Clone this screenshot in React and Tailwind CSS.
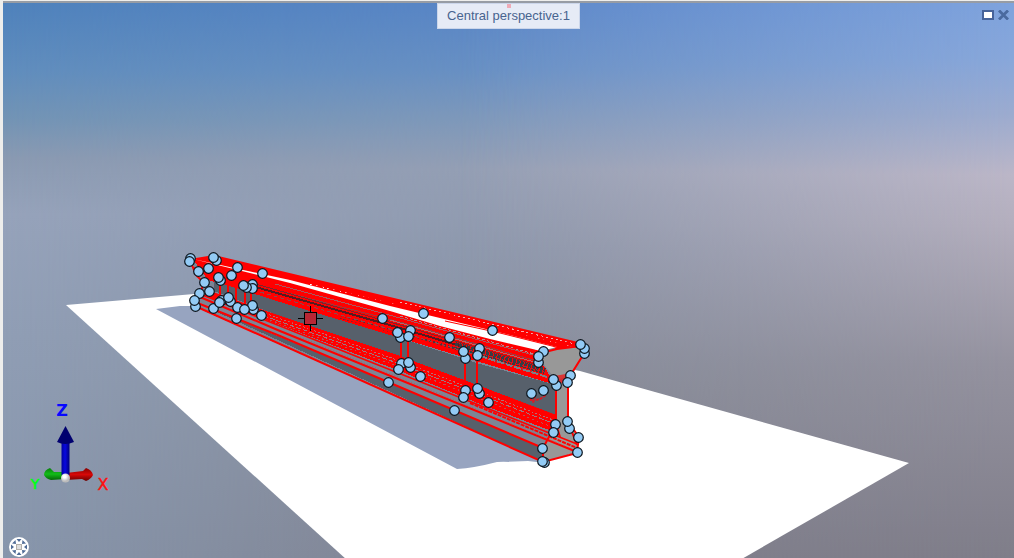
const NODES = [
  [190, 258], [189, 261], [216, 260], [213, 257], [237, 267], [262, 273], [198, 271], [208, 268], [231, 275],
  [220, 280], [218, 277], [204, 282], [209, 291], [199, 293], [195, 306], [194, 300], [213, 308], [221, 300],
  [219, 302], [230, 301], [228, 297], [237, 307], [252, 284], [252, 288], [246, 287], [243, 285], [253, 309],
  [252, 305], [244, 309], [261, 315], [236, 318], [382, 318], [423, 313], [492, 330], [400, 337], [397, 332],
  [410, 330], [408, 336], [449, 337], [465, 358], [463, 351], [479, 348], [477, 355], [401, 363], [398, 369],
  [410, 367], [408, 362], [420, 376], [388, 382], [465, 390], [463, 397], [479, 393], [477, 388], [488, 402],
  [454, 410], [543, 351], [538, 362], [538, 356], [584, 353], [584, 348], [580, 344], [556, 385], [553, 379],
  [570, 375], [567, 382], [531, 393], [543, 390], [555, 424], [553, 432], [569, 428], [567, 421], [578, 437],
  [577, 452], [542, 448], [544, 462], [542, 461],
];

const RED_EDGES = [
  "M190 260L214 256L582 344",
  "M214 260L582 348",
  "M194 268L290 290L541 359",
  "M210 279L280 300L400 334L556 382",
  "M210 292L280 317L400 358L556 416",
  "M200 297L280 331L577 452",
  "M195 302L280 336L388 382L543 448",
  "M195 306L543 462L577 453",
];

const THIN_EDGES = [
  "M401 335V366M408 335V365M465 356V394M477 354V391",
  "M228 276V300M236 278V305M245 286V308M251 286V306M220 279V302",
  "M556 383V424M568 380V422",
  "M541 353L557 349L581 346L585 352L570 376L568 382",
  "M556 424L543 448V462M568 422L579 437L577 452",
  "M568 422L577 445M556 424L560 437",
  "M190 260L196 275L204 283L200 293L194 302",
];

function Viewport() {
  return (
    <svg className="absolute inset-0 h-full w-full" viewBox="3 3 1011 555" preserveAspectRatio="xMinYMin slice" role="img" aria-label="3D beam model">
      <polygon points="66,305 194,294 580,371 909,463 740,560 347,560" fill="#fff" />
      <path d="M156 309L180 306L200 306L545 463L528 461L497 462Q474 468 457 469Z" fill="#97a4c0" />

      <g shapeRendering="crispEdges">
        <polygon points="190,259 214,256 582,344 570,376 568,422 577,452 543,462 195,307 204,283" fill="#7c8595" />
        <polygon points="190,260 214,256 582,344 557,349" fill="#f00" />
        <polygon points="194,261 214,265 290,283 541,351 541,362 556,385 400,338 280,303 208,280" fill="#f00" />
        <polygon points="214,281 280,302 400,338 480,364 556,385 556,416 480,387 400,357 280,316 214,291" fill="#57606b" />
        <polygon points="208,291 280,316 400,356 480,386 556,415 557,433 480,404 400,371 280,325 204,296" fill="#f00" />
        <polygon points="195,302 280,337 388,382 543,448 543,462" fill="#57606b" />

        <g fill="none">
          <path d="M275 284L400 318L540 357" stroke="#a75a60" strokeWidth="1" />
          <path d="M400 316L541 356" stroke="#b98a90" strokeWidth="1" strokeDasharray="3 2" />
          <path d="M265 287L400 322L540 362" stroke="#9a3a40" strokeWidth="1" />
          <path d="M390 320L541 364" stroke="#b76768" strokeWidth="1" />
          <path d="M245 281L400 325L541 366" stroke="#7f252b" strokeWidth="1" />
          <path d="M252 286L400 328L470 349" stroke="#541c22" strokeWidth="2" />
          <path d="M455 345L545 371" stroke="#373d45" strokeWidth="6" strokeDasharray="3 1" />
          <path d="M455 346L547 373" stroke="#d01820" strokeWidth="1" strokeDasharray="5 2" />
          <path d="M340 317L460 350" stroke="#51333b" strokeWidth="3" strokeDasharray="2 2" />
          <path d="M260 292L400 332L549 377" stroke="#8a4a50" strokeWidth="1" strokeDasharray="4 3" />
          <path d="M480 356L550 378" stroke="#7c8088" strokeWidth="2" strokeDasharray="7 2" />
          <path d="M250 308L400 361L553 420" stroke="#b86b71" strokeWidth="1" strokeDasharray="2 2" />
          <path d="M250 311L400 364L555 424" stroke="#9c7880" strokeWidth="1" strokeDasharray="5 2" />
          <path d="M270 320L400 367L555 428" stroke="#b65056" strokeWidth="1" strokeDasharray="2 3" />
          <path d="M310 284L440 314L575 347" stroke="#fff" strokeWidth="1" strokeDasharray="2 4" />
          <path d="M400 302L575 344" stroke="#efadb0" strokeWidth="1" strokeDasharray="2 3" />
        </g>
      </g>

      <g fill="#989898">
        <polygon points="541,354 557,349 581,347 585,352 570,376 556,380 541,361" />
        <polygon points="556,382 568,380 568,422 556,424" />
        <polygon points="556,424 568,422 579,437 577,452 543,462 543,448" />
      </g>
      <path d="M549 377L571 373L568 381L556 385Z" fill="#f00" opacity=".65" />

      <g fill="none" stroke="#f00" strokeWidth="2">
        {RED_EDGES.map((d) => <path key={d} d={d} />)}
      </g>
      <polygon points="193,259 290,280 390,306 440,318 490,330 557,347 541,351 490,339 440,326 390,311 290,283" fill="#fff" />
      <path d="M445 321L500 333L560 348" stroke="#f00" fill="none" />
      <g fill="none">
        <path d="M200 294L280 326L577 444" stroke="#f00" strokeWidth="1.5" />
        <path d="M470 403L577 448" stroke="#f00" strokeWidth="2" strokeDasharray="4 1" />
        <path d="M300 337L440 394L565 446" stroke="#b05a62" strokeDasharray="1 2" />
      </g>
      <g fill="none" stroke="#f00" strokeWidth="2">
        {THIN_EDGES.map((d) => <path key={d} d={d} />)}
        <path d="M531 398V401L540 399L546 395M535 396L533 403" strokeDasharray="3 1" stroke="#d51c24" />
      </g>

      <g fill="#93cbf5" stroke="#0b141c" strokeWidth="1.2">
        {NODES.map(([x, y]) => <circle key={`${x}-${y}`} cx={x + 0.5} cy={y + 0.5} r="4.8" />)}
      </g>

      <g stroke="#000" shapeRendering="crispEdges">
        <path d="M298 318.5H323M310.5 306V331" />
        <rect x="304.5" y="312.5" width="12" height="12" fill="#b82635" />
      </g>

      <AxisTriad />
    </svg>
  );
}

function AxisTriad() {
  return (
    <g>
      <defs>
        <linearGradient id="shaft">
          <stop offset="0" stopColor="#0000a0" />
          <stop offset=".45" stopColor="#0808e0" />
          <stop offset="1" stopColor="#00007c" />
        </linearGradient>
        <linearGradient id="greenShaft" x2="0" y2="1">
          <stop offset="0" stopColor="#087d0c" />
          <stop offset=".5" stopColor="#12bd18" />
          <stop offset="1" stopColor="#066508" />
        </linearGradient>
        <linearGradient id="redShaft" x2="0" y2="1">
          <stop offset="0" stopColor="#860000" />
          <stop offset=".5" stopColor="#d70808" />
          <stop offset="1" stopColor="#680000" />
        </linearGradient>
        <radialGradient id="origin" cx=".4" cy=".35">
          <stop offset=".3" stopColor="#fff" />
          <stop offset="1" stopColor="#bbb" />
        </radialGradient>
      </defs>
      <path d="M65 472L54 472L50 468Q44 470 44 475Q46 479 51 480L65 479Z" fill="url(#greenShaft)" />
      <path d="M66 473L83 471L86 468Q92 470 93 475Q91 479 86 481L82 479L66 480Z" fill="url(#redShaft)" />
      <path d="M61.500 442H69.500V475H61.500Z" fill="url(#shaft)" />
      <path d="M65.500 426L57 442Q65 446 74 442Z" fill="#00006f" />
      <circle cx="65.500" cy="478" r="4.500" fill="url(#origin)" />
      <text x="62" y="416" textAnchor="middle" fill="#0808ff" className="font-['DejaVu_Sans'] text-[16px] font-bold">Z</text>
      <text x="35" y="489" textAnchor="middle" fill="#00ff16" stroke="#00ff16" strokeWidth=".6" className="font-['DejaVu_Sans'] text-[14px]">Y</text>
      <text x="103" y="490" textAnchor="middle" fill="#ff1010" stroke="#ff1010" strokeWidth=".4" className="font-['DejaVu_Sans'] text-[16px]">X</text>
    </g>
  );
}

function NavigationIcon() {
  return (
    <svg width="20" height="20" viewBox="0 0 20 20" aria-hidden="true">
      <circle cx="10" cy="10" r="10" fill="#fff" />
      <g fill="#506c96">
        <path d="M7.500 2H12.500L10 5ZM7.500 18H12.500L10 15ZM2 7.500V12.500L5 10ZM18 7.500V12.500L15 10Z" />
        <path d="M3 6.500L6.500 3L7 7ZM17 6.500L13.500 3L13 7ZM3 13.500L6.500 17L7 13ZM17 13.500L13.500 17L13 13Z" />
      </g>
      <rect x="7.500" y="7.500" width="5" height="5" fill="#dedede" stroke="#b4b0aa" />
    </svg>
  );
}

export default function App() {
  return (
    <main className="flex h-screen flex-col overflow-hidden border-t border-[#eeeeec] bg-[#eeeeec] pl-[3px] font-['Liberation_Sans',Arial,sans-serif]">
      <section className="relative flex flex-1 flex-col justify-between border-t-2 border-[#979ca4] bg-[linear-gradient(180deg,#4f82bc_0%,#608dbd_12%,#7394b5_21%,#8a9ab2_28%,#96a3bb_38%,#909eb5_60%,#8796ac_100%)]">
        <div className="absolute inset-0 bg-[linear-gradient(180deg,#5a86c8_0%,#6990c4_12%,#8099bb_21%,#959fb4_30%,#8c96aa_45%,#868b98_70%,#80808d_100%)] [mask-image:linear-gradient(90deg,transparent_0%,black_55%)]" />
        <div className="absolute inset-0 bg-[linear-gradient(180deg,#7fa3dd_0%,#88a7da_10%,#9cabcf_20%,#bbb6c7_31%,#b3aebd_40%,#94929f_65%,#7f7d89_100%)] [mask-image:linear-gradient(90deg,transparent_45%,black_100%)]" />
        <Viewport />
        <header className="relative grid grid-cols-[1fr_auto_1fr] items-start">
          <h1 className="relative col-start-2 border border-[#cbd6eb] bg-[#e6ebf6] px-[9px] text-[13px] leading-6 text-[#48648f]">
            <span className="absolute left-[69px] top-0 h-1 w-1 bg-[#efabb7]" />
            Central perspective:1
          </h1>
          <div className="flex justify-end gap-1 pr-[5px] pt-[7px]">
            <button type="button" aria-label="Maximize" className="h-[10px] w-3 border-2 border-[#46639a] bg-white" />
            <button type="button" aria-label="Close" className="h-[10px] w-[11px]">
              <svg width="11" height="10" viewBox="0 0 11 10" aria-hidden="true">
                <path d="M1 .5L10 9.500M10 .5L1 9.500" stroke="#4a6a9f" strokeWidth="2.800" />
              </svg>
            </button>
          </div>
        </header>
        <button type="button" aria-label="Navigation" className="relative mb-px ml-[6px] h-5 w-5">
          <NavigationIcon />
        </button>
      </section>
    </main>
  );
}
